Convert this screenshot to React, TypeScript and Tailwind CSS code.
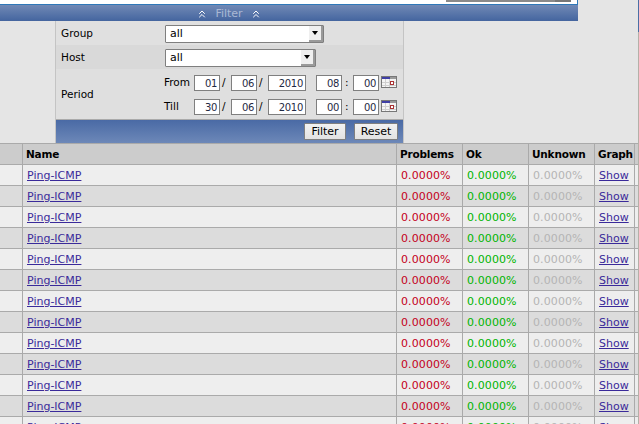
import { ChevronsUp } from 'lucide-react';

const dateRows = [
  { label: 'From', d: '01', m: '06', y: '2010', h: '08', i: '00' },
  { label: 'Till', d: '30', m: '06', y: '2010', h: '00', i: '00' },
];

function NumBox({ value, width }: { value: string; width: string }) {
  return (
    <span className={`${width} flex h-[16px] items-center justify-end border border-[#7f7f7f] bg-white pr-[2px] text-[10px] tracking-[-0.3px] text-[#1f2a44]`}>
      {value}
    </span>
  );
}

function CalendarIcon() {
  return (
    <svg width="16" height="12" viewBox="0 0 16 12" className="ml-[2px] mt-[-2px]">
      <rect x="0.5" y="0.5" width="15" height="11" fill="#f4f4f4" stroke="#777" />
      <rect x="1" y="1" width="8" height="2" fill="#3f3fa5" />
      <rect x="9" y="1" width="6" height="2" fill="#999" />
      <path d="M4.5 3v8M8.5 3v8M1 6.5h14M1 9.5h14" stroke="#cfcfcf" />
      <rect x="9.5" y="5.5" width="3" height="3" fill="#fff" stroke="#a33" />
    </svg>
  );
}

function SelectBox({ width }: { width: string }) {
  return (
    <div className={`${width} flex h-[18px] items-center justify-between rounded-[1px] border border-[#7f7f7f] bg-white pl-[4px] text-[11px] text-black`}>
      <span>all</span>
      <span className="flex h-[16px] w-[14px] items-center justify-center border-r-2 border-b-2 border-[#9a9a9a] bg-[#efefef]">
        <span className="h-0 w-0 border-x-[3px] border-t-[4px] border-x-transparent border-t-black" />
      </span>
    </div>
  );
}

function FilterPanel() {
  return (
    <div className="ml-[55px] w-[349px] border-x border-[#c4c4c4] bg-[#dfdfdf] text-[10.5px] text-black">
      <div className="flex h-[24px] items-center bg-[#e0e0e0] pl-[5px] pt-[2px]">
        <span className="w-[104px]">Group</span>
        <SelectBox width="w-[159px]" />
      </div>
      <div className="flex h-[24px] items-center bg-[#d9d9d9] pl-[5px] pt-[2px]">
        <span className="w-[104px]">Host</span>
        <SelectBox width="w-[151px]" />
      </div>
      <div className="flex h-[50px] items-center pl-[5px] pt-[2px]">
        <span className="w-[103px]">Period</span>
        <div className="flex flex-col gap-[8px]">
          {dateRows.map((r) => (
            <div key={r.label} className="flex h-[16px] items-center">
              <span className="w-[30px] pb-[1px]">{r.label}</span>
              <NumBox value={r.d} width="w-[26px]" />
              <span className="w-[11px] pl-[2px]">/</span>
              <NumBox value={r.m} width="w-[26px]" />
              <span className="w-[11px] pl-[2px]">/</span>
              <NumBox value={r.y} width="w-[38px]" />
              <span className="w-[10px]" />
              <NumBox value={r.h} width="w-[26px]" />
              <span className="w-[11px] pl-[3px]">:</span>
              <NumBox value={r.i} width="w-[26px]" />
              <CalendarIcon />
            </div>
          ))}
        </div>
      </div>
      <div className="flex h-[24px] items-center justify-end gap-[8px] border-t border-[#aaaaaa] bg-gradient-to-b from-[#4a6aa5] to-[#6d88b8] pr-[5px]">
        <button className="h-[17px] w-[42px] rounded-[1px] border border-[#7f7f7f] bg-gradient-to-b from-[#f2f2f2] to-[#e2e2e2] text-[11px] leading-none">Filter</button>
        <button className="h-[17px] w-[44px] rounded-[1px] border border-[#7f7f7f] bg-gradient-to-b from-[#f2f2f2] to-[#e2e2e2] text-[11px] leading-none">Reset</button>
      </div>
    </div>
  );
}

const gridCols = 'grid grid-cols-[23px_374px_66px_66px_66px_40px]';
const cell = 'flex items-center border-r border-[#aaaaaa] pl-[4px] pt-[2px]';

function Row({ index }: { index: number }) {
  const bg = index % 2 === 0 ? 'bg-[#eeeeee]' : 'bg-[#dcdcdc]';
  return (
    <div className={`${gridCols} h-[21px] items-stretch border-b border-[#aaaaaa] text-[11px] ${bg}`}>
      <div className="border-r border-[#aaaaaa]" />
      <div className={cell}>
        <a className="text-[#3a2a9a] underline">Ping-ICMP</a>
      </div>
      <div className={`${cell} tracking-[0.1px] text-[#c40020]`}>0.0000%</div>
      <div className={`${cell} tracking-[0.1px] text-[#00b400]`}>0.0000%</div>
      <div className={`${cell} tracking-[0.1px] text-[#b4b4b4]`}>0.0000%</div>
      <div className={cell}>
        <a className="text-[#3a2a9a] underline">Show</a>
      </div>
    </div>
  );
}

export default function App() {
  return (
    <div className="flex h-[424px] w-[639px] overflow-hidden bg-[#e5e5e5] font-['DejaVu_Sans',sans-serif]">
      <div className="w-[638px]">
        <div className="w-[578px]">
          <div className="flex h-[4px] justify-end border-r border-[#2f78b8] bg-white pr-[6px]">
            <div className="flex h-[2px] w-[125px] justify-end bg-[#8a8a8a]">
              <div className="h-[2px] w-[16px] bg-[#777777]" />
            </div>
          </div>
          <div className="flex h-[17px] items-center justify-center gap-[7px] border-t border-[#2f78b8] bg-gradient-to-b from-[#7189b5] to-[#44659f] pr-[120px] pt-[2px] text-[11px] text-[#a9b8d4]">
            <ChevronsUp size={12} className="text-white" />
            <span>Filter</span>
            <ChevronsUp size={12} className="text-white" />
          </div>
        </div>
        <FilterPanel />
        <div className={`${gridCols} h-[22px] border-y border-[#aaaaaa] bg-[#cccccc] text-[10.5px] font-bold tracking-[-0.2px] text-black`}>
          <div className="border-r border-[#aaaaaa]" />
          {['Name', 'Problems', 'Ok', 'Unknown', 'Graph'].map((h) => (
            <div key={h} className="flex items-center border-r border-[#aaaaaa] pl-[3px] pt-[2px]">{h}</div>
          ))}
        </div>
        {Array.from({ length: 13 }).map((_, i) => (
          <Row key={i} index={i} />
        ))}
      </div>
      <div className="flex w-[1px] flex-col">
        <div className="h-[32px] bg-[#4a6fa5]" />
        <div className="flex-1 bg-[#b5b0a8]" />
      </div>
    </div>
  );
}
